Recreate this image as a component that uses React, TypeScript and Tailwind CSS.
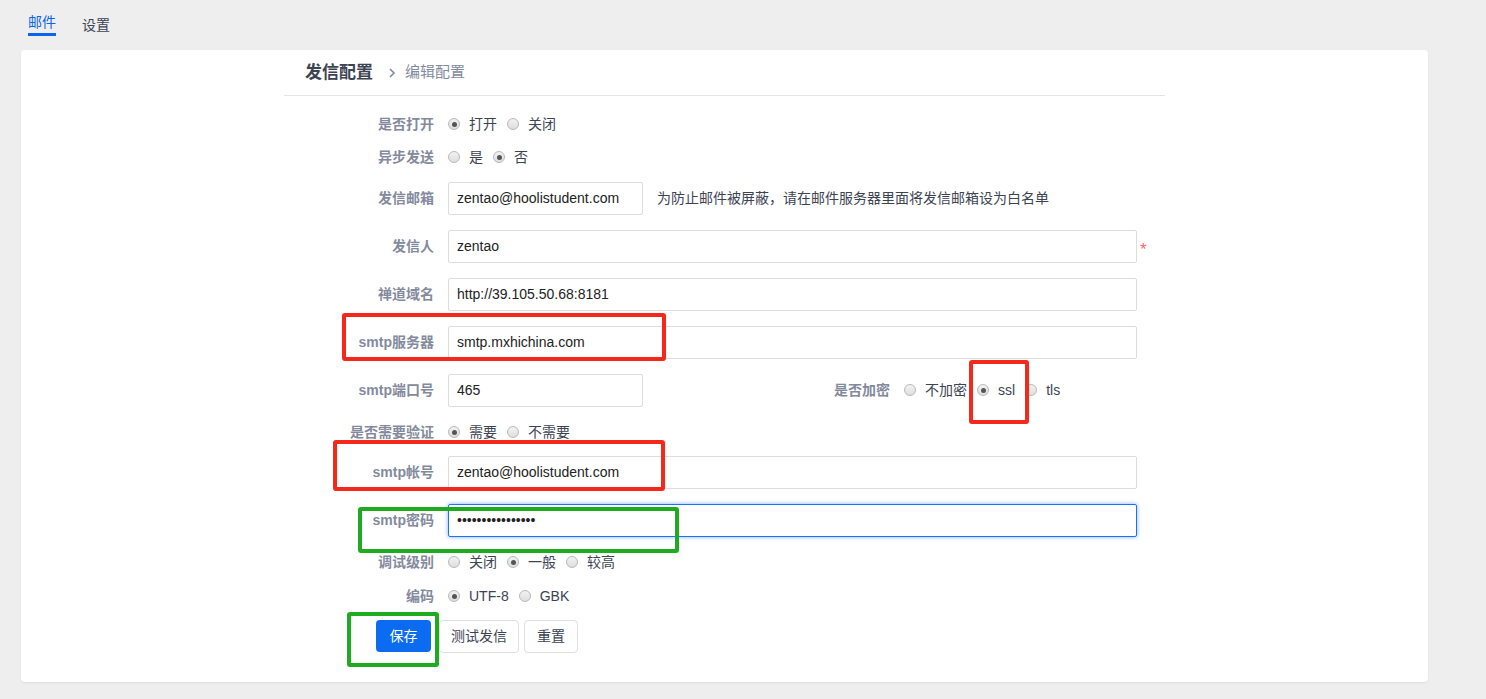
import React from "react";

const Radio = ({ checked }: { checked?: boolean }) => (
  <span className="w-[12px] h-[12px] rounded-full border border-[#b9b9b9] bg-[linear-gradient(#f2f2f2,#dedede)] flex items-center justify-center shrink-0">
    {checked && <span className="w-[5px] h-[5px] rounded-full bg-[#555]" />}
  </span>
);

const RadioGroup = ({ items, checked }: { items: string[]; checked: number }) => (
  <div className="flex items-center gap-[10px]">
    {items.map((t, i) => (
      <div key={t} className="flex items-center gap-[9px]">
        <Radio checked={i === checked} />
        <span className="text-[14px] text-[#3c4353] leading-none">{t}</span>
      </div>
    ))}
  </div>
);

const Row = ({
  label,
  h,
  children,
}: {
  label: string;
  h: string;
  children?: React.ReactNode;
}) => (
  <div className={`flex items-center ${h}`}>
    <div className="w-[150px] shrink-0 text-right font-bold text-[14px] text-[#838a9d]">
      {label}
    </div>
    <div className="ml-[14px] flex items-center flex-1">{children}</div>
  </div>
);

const Input = ({
  value,
  w,
  type = "text",
  focus,
}: {
  value: string;
  w: string;
  type?: string;
  focus?: boolean;
}) => (
  <input
    readOnly
    type={type}
    defaultValue={value}
    className={`${w} h-[33px] rounded-[2px] px-[8px] text-[14px] text-[#222] outline-none bg-white ${
      focus
        ? "border border-[#1a73f0] shadow-[0_0_4px_rgba(20,110,240,0.55)]"
        : "border border-[#dcdcdc]"
    }`}
  />
);

export default function App() {
  return (
    <div className="relative w-full h-[699px] bg-[#eeeeee] font-['Liberation_Sans','Noto_Sans_CJK_SC',sans-serif] overflow-hidden">
      {/* tabs */}
      <div className="h-[50px] flex items-start pl-[28px] gap-[26px]">
        <div className="flex flex-col items-center pt-[13px]">
          <span className="text-[14px] leading-[18px] text-[#0c64eb]">邮件</span>
          <span className="mt-[2px] h-[3px] w-[28px] bg-[#0c64eb]" />
        </div>
        <div className="pt-[13px]">
          <span className="text-[14px] leading-[18px] text-[#3c4353]">设置</span>
        </div>
      </div>

      {/* card */}
      <div className="ml-[21px] w-[1407px] h-[632px] bg-white rounded-[4px] shadow-[0_1px_2px_rgba(0,0,0,0.08)]">
        <div className="w-[881px] mx-auto">
          <div className="h-[46px] border-b border-[#e5e5e5] flex items-center pl-[21px]">
            <span className="text-[17px] font-bold text-[#3c4353]">发信配置</span>
            <svg width="10" height="12" viewBox="0 0 10 12" className="ml-[14px]">
              <polyline points="3,2 7,6 3,10" fill="none" stroke="#838a9d" strokeWidth="1.6" />
            </svg>
            <span className="ml-[8px] text-[15px] text-[#838a9d]">编辑配置</span>
          </div>

          <div className="pt-[12px]">
            <Row label="是否打开" h="h-[32px]">
              <RadioGroup items={["打开", "关闭"]} checked={0} />
            </Row>
            <Row label="异步发送" h="h-[34px]">
              <RadioGroup items={["是", "否"]} checked={1} />
            </Row>
            <Row label="发信邮箱" h="h-[48px]">
              <Input value="zentao@hoolistudent.com" w="w-[195px]" />
              <span className="ml-[14px] text-[14px] text-[#3c4353]">
                为防止邮件被屏蔽，请在邮件服务器里面将发信邮箱设为白名单
              </span>
            </Row>
            <Row label="发信人" h="h-[48px]">
              <Input value="zentao" w="w-[689px]" />
              <span className="ml-[3px] text-[17px] text-[#f66] leading-none mt-[6px]">*</span>
            </Row>
            <Row label="禅道域名" h="h-[48px]">
              <Input value="http://39.105.50.68:8181" w="w-[689px]" />
            </Row>
            <Row label="smtp服务器" h="h-[48px]">
              <Input value="smtp.mxhichina.com" w="w-[689px]" />
            </Row>
            <Row label="smtp端口号" h="h-[48px]">
              <Input value="465" w="w-[195px]" />
              <span className="w-[247px] text-right font-bold text-[14px] text-[#838a9d]">是否加密</span>
              <div className="ml-[14px]">
                <RadioGroup items={["不加密", "ssl", "tls"]} checked={1} />
              </div>
            </Row>
            <Row label="是否需要验证" h="h-[36px]">
              <RadioGroup items={["需要", "不需要"]} checked={0} />
            </Row>
            <Row label="smtp帐号" h="h-[44px]">
              <Input value="zentao@hoolistudent.com" w="w-[689px]" />
            </Row>
            <Row label="smtp密码" h="h-[52px]">
              <Input value="zentao1234567890" type="password" w="w-[689px]" focus />
            </Row>
            <Row label="调试级别" h="h-[32px]">
              <RadioGroup items={["关闭", "一般", "较高"]} checked={1} />
            </Row>
            <Row label="编码" h="h-[36px]">
              <RadioGroup items={["UTF-8", "GBK"]} checked={0} />
            </Row>
            <div className="h-[44px] flex items-center pl-[92px]">
              <button className="w-[55px] h-[32px] rounded-[4px] bg-[#0b6cf1] text-white text-[14px]">
                保存
              </button>
              <button className="ml-[8px] w-[80px] h-[33px] rounded-[4px] border border-[#dcdfe6] bg-white text-[#3c4353] text-[14px]">
                测试发信
              </button>
              <button className="ml-[5px] w-[54px] h-[33px] rounded-[4px] border border-[#dcdfe6] bg-white text-[#3c4353] text-[14px]">
                重置
              </button>
            </div>
          </div>
        </div>
      </div>

      {/* annotation boxes */}
      <div className="absolute left-[342px] top-[313px] w-[324px] h-[48px] border-[4px] border-[#f5281b] rounded-[3px]" />
      <div className="absolute left-[333px] top-[440px] w-[332px] h-[51px] border-[4px] border-[#f5281b] rounded-[3px]" />
      <div className="absolute left-[969px] top-[360px] w-[60px] h-[64px] border-[4px] border-[#f5281b] rounded-[3px]" />
      <div className="absolute left-[358px] top-[507px] w-[321px] h-[46px] border-[4px] border-[#1fab1f] rounded-[3px]" />
      <div className="absolute left-[347px] top-[612px] w-[92px] h-[55px] border-[4px] border-[#1fab1f] rounded-[3px]" />
    </div>
  );
}
